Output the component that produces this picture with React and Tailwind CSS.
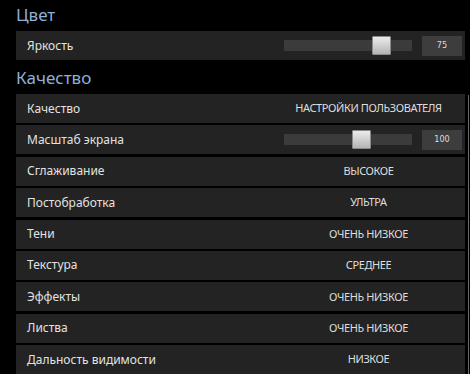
import React from 'react';

const rows = [
  { label: 'Качество', value: 'НАСТРОЙКИ ПОЛЬЗОВАТЕЛЯ' },
  { label: 'Масштаб экрана', slider: 100, pos: 68 },
  { label: 'Сглаживание', value: 'ВЫСОКОЕ' },
  { label: 'Постобработка', value: 'УЛЬТРА' },
  { label: 'Тени', value: 'ОЧЕНЬ НИЗКОЕ' },
  { label: 'Текстура', value: 'СРЕДНЕЕ' },
  { label: 'Эффекты', value: 'ОЧЕНЬ НИЗКОЕ' },
  { label: 'Листва', value: 'ОЧЕНЬ НИЗКОЕ' },
  { label: 'Дальность видимости', value: 'НИЗКОЕ' },
];

const Slider = ({ value, pos }) => (
  <div className="ml-auto flex items-center">
    <div className="relative h-[11px] w-[128px] bg-[#3b3b3b]">
      <div
        className="absolute top-[-4px] h-[19px] w-[19px] rounded-[1px] border border-[#8a8a8a] bg-gradient-to-b from-[#ececec] to-[#b4b4b4]"
        style={{ left: pos }}
      />
    </div>
    <div className="ml-[10px] mr-[3px] flex h-[20px] w-[40px] items-center justify-center bg-[#3d3d3d] text-[9px] text-[#dcdcdc] [font-family:'DejaVu_Sans_Condensed','Liberation_Sans',sans-serif]">
      {value}
    </div>
  </div>
);

const Row = ({ label, value, slider, pos }) => (
  <div className="flex h-[29px] items-center bg-[#232323] pl-[11px]">
    <span className="text-[12px] text-[#e2e2e2]">{label}</span>
    {slider ? (
      <Slider value={slider} pos={pos} />
    ) : (
      <div className="ml-auto w-[193px] text-center text-[11px] tracking-[-0.4px] text-[#dedede]">
        {value}
      </div>
    )}
  </div>
);

export default function App() {
  return (
    <div className="relative h-[374px] w-[470px] overflow-hidden bg-black [font-family:'Noto_Sans','Open_Sans',sans-serif]">
      <div className="pl-[16px] pr-[5px]">
        <div className="flex h-[31px] items-center pb-[3px] text-[17px] leading-none text-[#8eb0d8]">Цвет</div>
        <Row label="Яркость" slider={75} pos={88} />
        <div className="flex h-[34px] items-center text-[17px] leading-none text-[#8eb0d8]">Качество</div>
        <div className="flex flex-col gap-[2.4px]">
          {rows.map((r) => (
            <Row key={r.label} {...r} />
          ))}
        </div>
      </div>
      <div className="absolute right-[1px] top-[95px] bottom-0 w-[1px] bg-[#6a6a6a]" />
    </div>
  );
}
